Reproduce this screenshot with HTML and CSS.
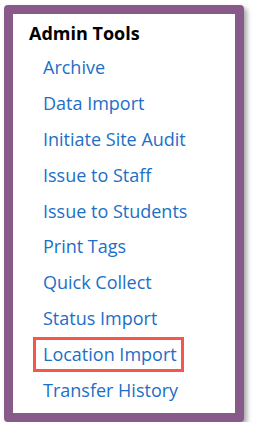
FILE: index.html
```html
<!DOCTYPE html>
<html lang="en">
<head>
  <meta charset="UTF-8">
  <title>Admin Tools</title>
  <link rel="stylesheet" href="styles.css">
</head>
<body>

  <div class="panel">
    <h2>Admin Tools</h2>
    <ul class="tools">
      <li><a href="#">Archive</a></li>
      <li><a href="#">Data Import</a></li>
      <li><a href="#">Initiate Site Audit</a></li>
      <li><a href="#">Issue to Staff</a></li>
      <li><a href="#">Issue to Students</a></li>
      <li><a href="#">Print Tags</a></li>
      <li><a href="#">Quick Collect</a></li>
      <li><a href="#">Status Import</a></li>
      <li><a href="#" class="marked">Location Import</a></li>
      <li><a href="#">Transfer History</a></li>
    </ul>
  </div>

</body>
</html>
```

FILE: styles.css
```css
body {
  margin: 0;
  background: #fff;
  font-family: "Open Sans", "Noto Sans", sans-serif;
}
.panel {
  width: 222px;
  height: 399px;
  margin: 5px 0 0 4px;
  border: 9px solid #885a8a;
  border-radius: 4px;
  background: #fff;
  box-shadow: 3px 3px 5px rgba(0,0,0,0.35);
}
h2 {
  margin: 0;
  padding: 8px 0 0 16px;
  font-size: 18px;
  font-weight: bold;
  line-height: 22px;
  color: #000;
}
.tools {
  list-style: none;
  margin: 0;
  padding: 6px 0 0 30px;
}
.tools li {
  height: 35.9px;
  line-height: 35.9px;
}
.tools a {
  color: #1c6fc6;
  text-decoration: none;
  font-size: 18px;
}
.tools a.marked {
  display: inline-block;
  margin-left: -10px;
  padding: 0 4px 0 7px;
  line-height: 29px;
  border: 3px solid #f5584a;
}
```
